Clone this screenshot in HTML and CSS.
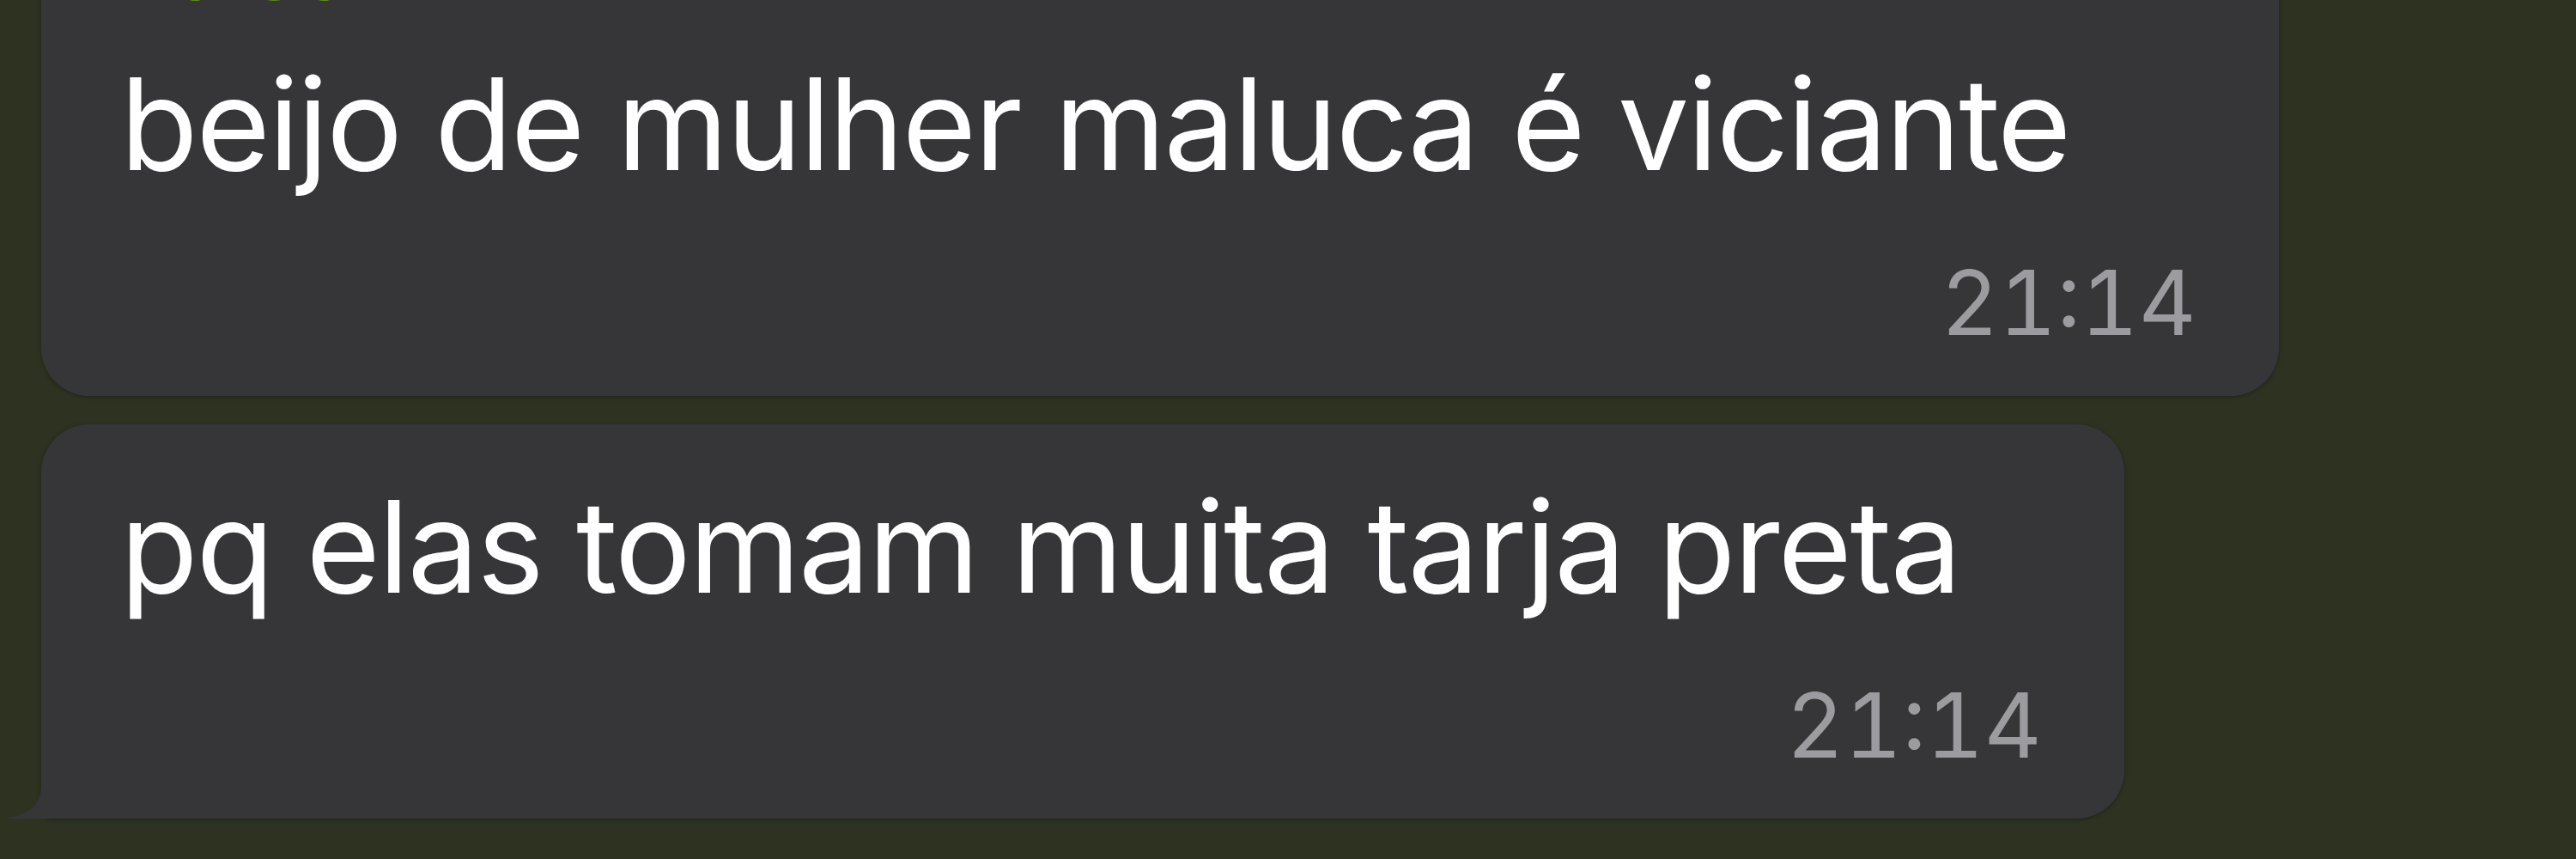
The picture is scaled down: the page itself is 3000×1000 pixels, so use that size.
FILE: index.html
```html
<!doctype html>
<html lang="pt-BR">
  <head>
    <meta charset="UTF-8" />
    <meta name="viewport" content="width=device-width, initial-scale=1.0" />
    <title>Conversa</title>
    <link rel="stylesheet" href="styles.css">
  </head>
  <body>
    <main class="chat">
      <!-- primeira mensagem do grupo: nome do remetente cortado no topo -->
      <div class="bubble bubble--first">
        <div class="sender">Lu Ju</div>
        <div class="text">beijo de mulher maluca é viciante</div>
        <div class="time">21:14</div>
      </div>

      <!-- última mensagem do grupo, com a "cauda" embaixo à esquerda -->
      <div class="bubble bubble--last">
        <div class="text">pq elas tomam muita tarja preta</div>
        <div class="time">21:14</div>
        <svg class="tail" width="60" height="72" viewBox="0 0 60 72" aria-hidden="true">
          <path d="M44 0 L44 34 C44 56 30 68 2 72 L60 72 L60 0 Z" />
        </svg>
      </div>
    </main>
  </body>
</html>
```

FILE: styles.css
```css
html,
body {
  margin: 0;
  height: 100%;
}

body {
  background-color: #2d3320; /* fundo verde-oliva escuro */
  font-family: Inter, "Liberation Sans", sans-serif;
  overflow: hidden;
}

.chat {
  display: flex;
  flex-direction: column;
  align-items: flex-start;
  gap: 33px;
  padding-left: 48px;
  margin-top: -160px; /* o início da conversa fica fora da tela */
}

.bubble {
  position: relative; /* para a cauda */
  box-sizing: border-box;
  background-color: #363639;
  border-radius: 56px;
  padding: 53px 96px 40px 92px;
  box-shadow: 0 1px 5px rgba(0, 0, 0, 0.35);
}

.bubble--first {
  width: 2606px;
}

.bubble--last {
  width: 2426px;
  border-bottom-left-radius: 12px;
}

.sender {
  font-size: 104px;
  line-height: 138px;
  font-weight: 600;
  color: #5e8f1f;
  margin-bottom: 24px;
  padding-left: 2px;
}

.text {
  font-size: 148px;
  line-height: 180px;
  letter-spacing: -2.1px;
  color: #ffffff;
  white-space: nowrap;
}

.time {
  margin-top: 48px;
  font-size: 104px;
  line-height: 138px;
  font-variant-numeric: tabular-nums;
  text-align: right;
  color: #9b9ba0;
}

.tail {
  position: absolute;
  left: -44px;
  bottom: 0;
  fill: #363639;
}
```
